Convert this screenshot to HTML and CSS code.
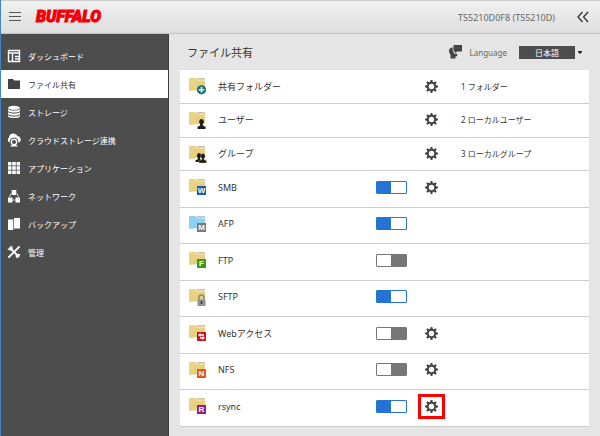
FILE: index.html
```html
<!DOCTYPE html>
<html lang="ja">
<head>
<meta charset="utf-8">
<title>ファイル共有</title>
<link rel="stylesheet" href="styles.css">
</head>
<body>
<svg class="defs" aria-hidden="true">
  <defs>
    <linearGradient id="paper" x1="0" y1="0" x2="1" y2="1"><stop offset="0" stop-color="#ecd58a"/><stop offset="1" stop-color="#e6cb78"/></linearGradient>
    <symbol id="folder" viewBox="0 0 18 18"><path d="M0 1h6.500l1 1.500H16V12.500L0 14z" fill="url(#paper)"/><path d="M8 1.500h8v1H8z" fill="#9d8a55"/><path d="M8 2.500h8v1H8z" fill="#f7ecc4"/></symbol>
    <symbol id="folder-blue" viewBox="0 0 18 18"><path d="M0 1h6.500l1 1.500H16V12.500L0 14z" fill="#8ed1f0"/><path d="M8 1.500h8v1H8z" fill="#6799b0"/><path d="M8 2.500h8v1H8z" fill="#d5f0fb"/></symbol>
    <symbol id="gear" viewBox="-7 -7 14 14"><circle r="4" fill="none" stroke="#444" stroke-width="2.200"/><g fill="#444"><path id="t" d="M-1.500 -4.500L-.9 -7H.9L1.500 -4.500z"/><use href="#t" transform="rotate(45)"/><use href="#t" transform="rotate(90)"/><use href="#t" transform="rotate(135)"/><use href="#t" transform="rotate(180)"/><use href="#t" transform="rotate(225)"/><use href="#t" transform="rotate(270)"/><use href="#t" transform="rotate(315)"/></g></symbol>
  </defs>
</svg>
<div class="app">
  <header class="topbar">
    <button class="icon-button" aria-label="メニュー"><svg width="12" height="12" viewBox="0 0 12 12"><path d="M0 1.500h12M0 5.500h12M0 9.500h12" stroke="#555" fill="none"/></svg></button>
    <span class="brand">BUFFALO</span>
    <span class="device">TS5210D0F8 (TS5210D)</span>
    <button class="icon-button" aria-label="閉じる"><svg width="12" height="12" viewBox="0 0 12 12"><path d="M5.500 1L1 6l4.500 5M11 1L6.500 6l4.500 5" stroke="#333" stroke-width="1.300" fill="none"/></svg></button>
  </header>
  <div class="body">
    <nav class="sidebar">
      <a class="nav-item" href="#"><svg viewBox="0 0 14 14"><path d="M1.500 1.500h11v11h-11zM1.500 4h11M5.500 5v8M8 7.500h5M8 10h5" fill="none" stroke="#fff" stroke-width="1.400"/></svg>ダッシュボード</a>
      <a class="nav-item active" href="#"><svg viewBox="0 0 14 14"><path d="M1 2h5l1 1.500h6V12H1z" fill="#444"/></svg>ファイル共有</a>
      <a class="nav-item" href="#"><svg viewBox="0 0 14 14"><g fill="#fff"><ellipse cx="7" cy="2.800" rx="6" ry="2"/><path d="M1 4c2 2 10 2 12 0v2c-2 2-10 2-12 0zM1 7c2 2 10 2 12 0v2c-2 2-10 2-12 0zM1 10c2 2 10 2 12 0v1.500c-2 2-10 2-12 0z"/></g></svg>ストレージ</a>
      <a class="nav-item" href="#"><svg viewBox="0 0 14 14"><path d="M2.500 9.500A3 3 0 0 1 2 4.500 4.500 4.500 0 0 1 10.500 3 3.500 3.500 0 0 1 12 9.500z" fill="#fff"/><circle cx="7" cy="9" r="4" fill="#fff" stroke="#4d4d4d"/><circle cx="7" cy="9" r="2" fill="#4d4d4d"/><path d="M3 13.500l2.500-2h3l2.500 2z" fill="#fff"/></svg>クラウドストレージ連携</a>
      <a class="nav-item" href="#"><svg viewBox="0 0 14 14"><path d="M1 1h3.500v3.500H1zM5.300 1h3.500v3.500H5.300zM9.600 1H13v3.500H9.600zM1 5.300h3.500v3.500H1zM5.300 5.300h3.500v3.500H5.300zM9.600 5.300H13v3.500H9.600zM1 9.600h3.500V13H1zM5.300 9.600h3.500V13H5.300zM9.600 9.600H13V13H9.600z" fill="#fff"/></svg>アプリケーション</a>
      <a class="nav-item" href="#"><svg viewBox="0 0 14 14"><path d="M4.700 1h4.600v5H4.700zM1 8.500h4.500v5H1zM8.500 8.500H13v5H8.500z" fill="#fff"/><path d="M4 4.500L2.500 8M10 4.500L11.500 8M5.500 11h3" stroke="#fff" stroke-width=".8"/></svg>ネットワーク</a>
      <a class="nav-item" href="#"><svg viewBox="0 0 14 14"><path d="M1 2.500h5.300V13H1zM7 1h6v10.500H7z" fill="#fff"/></svg>バックアップ</a>
      <a class="nav-item" href="#"><svg viewBox="0 0 14 14"><path d="M3 3l8.500 8.500M12 2L2 12" stroke="#fff" stroke-width="1.800" stroke-linecap="round"/><path d="M1 3.500A2.500 2.500 0 0 0 5 4 2.500 2.500 0 0 0 3.500 1M13 10.500A2.500 2.500 0 0 0 9.500 10 2.500 2.500 0 0 0 10.500 13" stroke="#fff" stroke-width="1.300" fill="none"/></svg>管理</a>
    </nav>
    <main class="content">
      <div class="heading">
        <h1>ファイル共有</h1>
        <label class="language" for="lang"><svg width="14" height="14" viewBox="0 0 14 14"><path d="M5.500 0H14v6.500h-5L7 8.500v-2H5.500z" fill="#444"/><path d="M4.800 2.500C2 2.500.8 4.500 1 6.500c.2 1.800 1.500 2.500 1.500 3.500v3.500h5v-2.300h1.700V8.800L6.300 9 6 7.200H4.800z" fill="#444"/></svg>Language</label>
        <select id="lang" class="select"><option>日本語</option></select>
        <svg class="caret" viewBox="0 0 4 3"><path d="M0 0h4v1L2 3 0 1z" fill="#222"/></svg>
      </div>
      <ul class="services">
        <li class="service compact"><svg class="kind" viewBox="0 0 18 18"><use href="#folder"/><circle cx="12.500" cy="12.800" r="4.600" fill="#14707b"/><path d="M12.500 10v5.600M9.700 12.800h5.600" stroke="#fff" stroke-width="1.600"/></svg><span class="name">共有フォルダー</span><button class="gear" aria-label="共有フォルダー 設定"><svg><use href="#gear"/></svg></button><span class="value">1 フォルダー</span></li>
        <li class="service compact"><svg class="kind" viewBox="0 0 18 18"><use href="#folder"/><path d="M12.500 8a2.400 2.700 0 0 1 1.200 5l.3 1.500 2.500 1.200V18h-8v-2.300l2.500-1.200.3-1.500A2.400 2.700 0 0 1 12.500 8z" fill="#1c1c1c"/></svg><span class="name">ユーザー</span><button class="gear" aria-label="ユーザー 設定"><svg><use href="#gear"/></svg></button><span class="value">2 ローカルユーザー</span></li>
        <li class="service compact"><svg class="kind" viewBox="0 0 18 18"><use href="#folder"/><path d="M10 8a2.400 2.700 0 0 1 1 5l.3 1.500 2.500 1.200V17H6.500v-1.800L9 14l.1-1A2.400 2.700 0 0 1 10 8z" fill="#1c1c1c"/><path d="M14 8.500a2.400 2.700 0 0 1 1 5l.2 1.200 2.300 1V18H10v-2l2.700-1.300.2-1.200A2.400 2.700 0 0 1 14 8.500z" fill="#1c1c1c" stroke="#c9b36c" stroke-width=".4"/></svg><span class="name">グループ</span><button class="gear" aria-label="グループ 設定"><svg><use href="#gear"/></svg></button><span class="value">3 ローカルグループ</span></li>
        <li class="service"><svg class="kind" viewBox="0 0 18 18"><use href="#folder"/><path d="M8 8h9v9H8z" fill="#1c5ba5"/><text class="badge" x="12.500" y="15">W</text></svg><label class="name" for="smb">SMB</label><input class="toggle" id="smb" type="checkbox" checked><button class="gear" aria-label="SMB 設定"><svg><use href="#gear"/></svg></button></li>
        <li class="service"><svg class="kind" viewBox="0 0 18 18"><use href="#folder-blue"/><path d="M8 8h9v9H8z" fill="#787878"/><text class="badge" x="12.500" y="15">M</text></svg><label class="name" for="afp">AFP</label><input class="toggle" id="afp" type="checkbox" checked></li>
        <li class="service"><svg class="kind" viewBox="0 0 18 18"><use href="#folder"/><path d="M8 8h9v9H8z" fill="#3c9a1c"/><text class="badge" x="12.500" y="15">F</text></svg><label class="name" for="ftp">FTP</label><input class="toggle" id="ftp" type="checkbox"></li>
        <li class="service"><svg class="kind" viewBox="0 0 18 18"><use href="#folder"/><path d="M10 12V9.500a2.500 2.500 0 0 1 5 0V12" fill="none" stroke="#888" stroke-width="1.400"/><path d="M8.500 11.500h8V18h-8z" fill="#8b959b"/><path d="M12.500 13v3" stroke="#333" stroke-width="1.400"/></svg><label class="name" for="sftp">SFTP</label><input class="toggle" id="sftp" type="checkbox" checked></li>
        <li class="service"><svg class="kind" viewBox="0 0 18 18"><use href="#folder"/><path d="M8 8h9v9H8z" fill="#c4161c"/><path d="M9 11l2.500-2v1.300H15v1.400h-3.500V13zM16 14l-2.500-2v1.300H11v1.400h2.500V16z" fill="#fff"/></svg><label class="name" for="web">Webアクセス</label><input class="toggle" id="web" type="checkbox"><button class="gear" aria-label="Webアクセス 設定"><svg><use href="#gear"/></svg></button></li>
        <li class="service"><svg class="kind" viewBox="0 0 18 18"><use href="#folder"/><path d="M8 8h9v9H8z" fill="#e2581a"/><text class="badge" x="12.500" y="15">N</text></svg><label class="name" for="nfs">NFS</label><input class="toggle" id="nfs" type="checkbox"><button class="gear" aria-label="NFS 設定"><svg><use href="#gear"/></svg></button></li>
        <li class="service"><svg class="kind" viewBox="0 0 18 18"><use href="#folder"/><path d="M8 8h9v9H8z" fill="#8c1e8c"/><text class="badge" x="12.500" y="15">R</text></svg><label class="name" for="rsync">rsync</label><input class="toggle" id="rsync" type="checkbox" checked><button class="gear marked" aria-label="rsync 設定"><svg><use href="#gear"/></svg></button></li>
      </ul>
    </main>
  </div>
</div>
</body>
</html>
```

FILE: styles.css
```css
* { box-sizing: border-box; }
body {
  margin: 0;
  font-family: "Noto Sans", "Noto Sans CJK JP", sans-serif;
  font-size: 8px;
  color: #333;
  background: #e5e5e5;
}
button { padding: 0; border: 0; background: none; font: inherit; }
.defs { position: absolute; width: 0; height: 0; }
.app { display: flex; flex-direction: column; min-height: 100vh; border-left: 1px solid #3c87c4; }
.topbar {
  display: flex; align-items: center; height: 34px; padding: 0 11px 0 8px;
  border-top: 1px solid #ccc; border-bottom: 1px solid #c4c4c4;
  background: linear-gradient(#f0f0f0, #dedede);
}
.icon-button { display: flex; }
.brand { margin-left: 15px; font: italic 900 16px/20px Roboto, sans-serif; color: #f00000; -webkit-text-stroke: 1px #f00000; }
.device { margin-left: auto; margin-right: 22px; font-size: 9px; color: #666; }
.body { display: flex; flex: 1; }
.sidebar { width: 168px; padding-top: 8px; background: #4d4d4d; border-right: 1px solid #404040; }
.nav-item { display: flex; align-items: center; gap: 7px; height: 28px; padding-left: 6px; color: #fff; text-decoration: none; }
.nav-item svg { width: 14px; height: 14px; }
.nav-item.active { background: #fff; color: #333; }
.content { display: flex; flex: 1; flex-direction: column; padding: 0 11px 9px 11px; }
.heading { display: flex; align-items: center; height: 36px; padding: 0 7px; }
h1 { margin: 0 auto 0 0; font-size: 11px; font-weight: 400; }
.language { display: flex; align-items: center; gap: 8px; font-size: 8px; color: #666; }
.select { appearance: none; width: 56px; height: 13px; margin-left: 12px; padding: 0; border: 0; border-radius: 0; background: #4d4d4d; color: #fff; font: inherit; line-height: 13px; text-align: center; text-align-last: center; }
.caret { width: 4px; height: 3px; margin-left: 3px; }
.services { display: flex; flex: 1; flex-direction: column; margin: 0; padding: 0; list-style: none; background: #fff; }
.service {
  display: grid; flex: 13 1 0; align-items: center; align-content: start;
  grid-template-columns: 29px 158px 42px 43px 1fr; grid-template-rows: 32px;
  padding-left: 9px; border-bottom: 1px solid #ccc;
}
.service.compact { flex-grow: 12; }
.kind { width: 18px; height: 18px; }
.badge { font: 700 8px "Liberation Sans", sans-serif; fill: #fff; text-anchor: middle; }
.name { grid-column: 2; font-size: 9px; }
.toggle {
  grid-column: 3; appearance: none; width: 31px; height: 13px; margin: 0;
  border: 1px solid #777; border-radius: 1px;
  background: linear-gradient(90deg, #fff 50%, #777 50%);
}
.toggle:checked { border-color: #2573d5; background: linear-gradient(90deg, #2573d5 50%, #fff 50%); }
.gear { grid-column: 4; display: flex; align-items: center; justify-content: center; width: 27px; height: 25px; }
.gear svg { width: 13px; height: 13px; }
.gear.marked { border: 3px solid #f00; }
.value { grid-column: 5; font-size: 8px; }
```
